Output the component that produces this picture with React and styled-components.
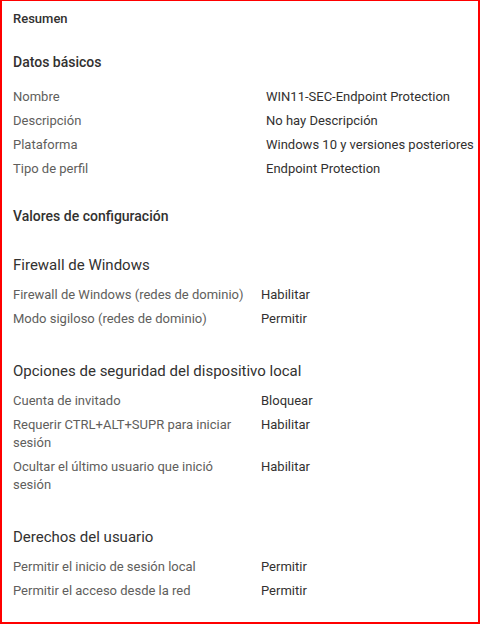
import React from "react";
import styled, { createGlobalStyle } from "styled-components";

const GlobalStyle = createGlobalStyle`
  html, body {
    margin: 0;
    padding: 0;
    background: #ffffff;
  }
  body {
    font-family: Roboto, "Noto Sans", Arial, sans-serif;
  }
`;

const Frame = styled.div`
  box-sizing: border-box;
  width: 480px;
  height: 624px;
  border: 2px solid #ff0000;
  border-top-width: 1px;
  padding: 9px 0 0 11px;
  background: #ffffff;
  overflow: hidden;
`;

const PageTitle = styled.div`
  font-size: 13px;
  line-height: 18px;
  font-weight: 500;
  color: #323130;
`;

const SectionTitle = styled.div`
  font-size: 14px;
  line-height: 20px;
  font-weight: 500;
  color: #323130;
  margin-top: ${p => p.$top}px;
`;

const GroupTitle = styled.div`
  font-size: 15px;
  line-height: 20px;
  font-weight: 400;
  color: #323130;
  margin-top: ${p => p.$top}px;
`;

const Rows = styled.div`
  display: grid;
  grid-template-columns: ${p => p.$labelWidth}px 1fr;
  column-gap: 8px;
  row-gap: 6px;
  margin-top: ${p => p.$top}px;
  font-size: 13px;
  line-height: 18px;
`;

const Label = styled.div`
  color: #605e5c;
`;

const Value = styled.div`
  color: #323130;
  white-space: nowrap;
`;

const basics = [
  ["Nombre", "WIN11-SEC-Endpoint Protection"],
  ["Descripción", "No hay Descripción"],
  ["Plataforma", "Windows 10 y versiones posteriores"],
  ["Tipo de perfil", "Endpoint Protection"]
];

const groups = [
  {
    title: "Firewall de Windows",
    top: 29,
    rows: [
      ["Firewall de Windows (redes de dominio)", "Habilitar"],
      ["Modo sigiloso (redes de dominio)", "Permitir"]
    ]
  },
  {
    title: "Opciones de seguridad del dispositivo local",
    top: 33,
    rows: [
      ["Cuenta de invitado", "Bloquear"],
      ["Requerir CTRL+ALT+SUPR para iniciar sesión", "Habilitar"],
      ["Ocultar el último usuario que inició sesión", "Habilitar"]
    ]
  },
  {
    title: "Derechos del usuario",
    top: 33,
    rows: [
      ["Permitir el inicio de sesión local", "Permitir"],
      ["Permitir el acceso desde la red", "Permitir"]
    ]
  }
];

const renderRows = rows =>
  rows.map(([label, value], idx) => (
    <React.Fragment key={idx}>
      <Label>{label}</Label>
      <Value>{value}</Value>
    </React.Fragment>
  ));

export default function App() {
  return (
    <>
      <GlobalStyle />
      <Frame>
        <PageTitle>Resumen</PageTitle>

        <SectionTitle $top={24}>Datos básicos</SectionTitle>
        <Rows $top={16} $labelWidth={245}>
          {renderRows(basics)}
        </Rows>

        <SectionTitle $top={28}>Valores de configuración</SectionTitle>

        {groups.map(group => (
          <div key={group.title}>
            <GroupTitle $top={group.top}>{group.title}</GroupTitle>
            <Rows $top={11} $labelWidth={240}>
              {renderRows(group.rows)}
            </Rows>
          </div>
        ))}
      </Frame>
    </>
  );
}
